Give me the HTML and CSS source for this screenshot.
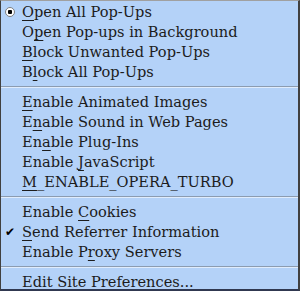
FILE: index.html
```html
<!DOCTYPE html>
<html lang="en">
  <head>
    <meta charset="UTF-8" />
    <title>Quick Preferences</title>
    <link rel="stylesheet" href="styles.css">
  </head>
  <body>
    <div class="menu">
      <ul class="group">
        <li class="item radio"><u>O</u>pen All Pop-Ups</li>
        <li class="item">O<u>p</u>en Pop-ups in Background</li>
        <li class="item"><u>B</u>lock Unwanted Pop-Ups</li>
        <li class="item">B<u>l</u>ock All Pop-Ups</li>
      </ul>
      <ul class="group">
        <li class="item"><u>E</u>nable Animated Images</li>
        <li class="item">E<u>n</u>able Sound in Web Pages</li>
        <li class="item">En<u>a</u>ble Plug-Ins</li>
        <li class="item">Enable <u>J</u>avaScript</li>
        <li class="item"><u>M</u>_ENABLE_OPERA_TURBO</li>
      </ul>
      <ul class="group">
        <li class="item">Enable <u>C</u>ookies</li>
        <li class="item check"><u>S</u>end Referrer Information</li>
        <li class="item">Enable P<u>r</u>oxy Servers</li>
      </ul>
      <ul class="group">
        <li class="item">Edit Site Preferences...</li>
      </ul>
    </div>
  </body>
</html>
```

FILE: styles.css
```css
html, body {
  margin: 0;
  padding: 0;
}

body {
  background: #b4d2f8;
}

.menu {
  box-sizing: border-box;
  width: 300px;
  height: 291px;
  overflow: hidden;
  background: #b4d2f8;
  border-top: 1px solid #a0a0a0;
  border-left: 1px solid #404040;
  border-right: 2px solid #404040;
  border-bottom: 2px solid #303850;
  font-family: "DejaVu Serif", serif;
  font-size: 14.6px;
  color: #1c1c1c;
  padding-top: 1px;
}

.group {
  list-style: none;
  margin: 0 0 5px;
  padding: 0 0 4px;
  border-bottom: 1px solid #8c9cb0;
  box-shadow: 0 1px 0 #e0ecfc;
}

.group:last-child {
  border-bottom: none;
  box-shadow: none;
  margin-bottom: 0;
}

.item {
  position: relative;
  height: 20px;
  line-height: 20px;
  padding-left: 21px;
  white-space: nowrap;
}

u {
  text-decoration-thickness: 1px;
  text-underline-offset: 3px;
}

.radio::before {
  content: "";
  position: absolute;
  left: 4px;
  top: 5px;
  width: 8px;
  height: 8px;
  border: 1px solid #808080;
  border-radius: 50%;
  background: radial-gradient(circle, #000 0 2px, #fff 2.5px);
}

.check::before {
  content: "\2714";
  position: absolute;
  left: 4px;
  top: 0;
  font-size: 12px;
  color: #000;
}
```
